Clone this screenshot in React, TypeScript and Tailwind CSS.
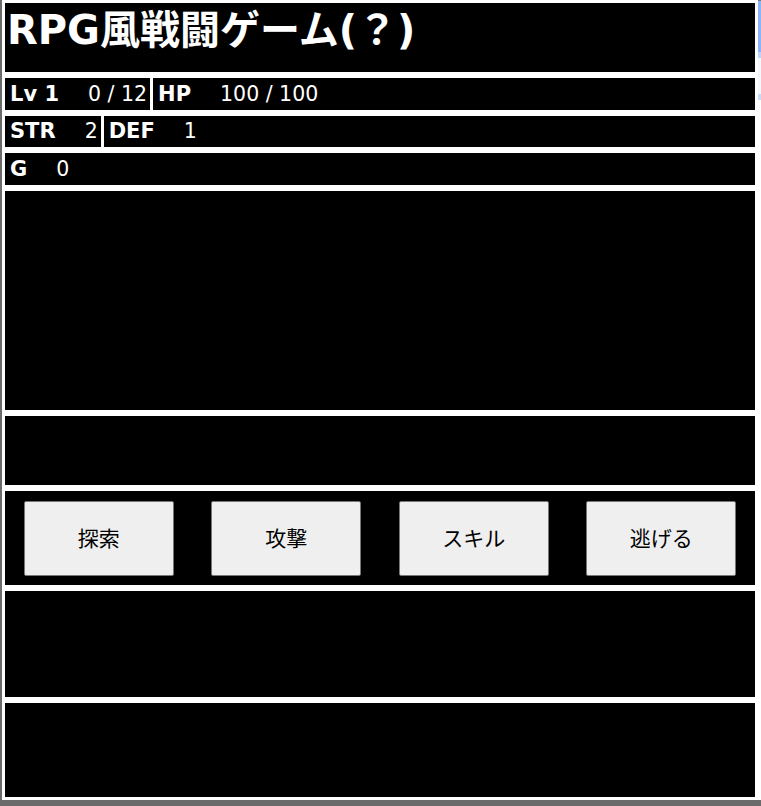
import React from 'react';

const font = { fontFamily: '"DejaVu Sans", "Noto Sans CJK JP", sans-serif' };

const Stat = ({ label, value, grow }: { label: string; value: string; grow?: boolean }) => (
  <div className={`flex items-center bg-black pl-[5px] pr-[3px] ${grow ? 'flex-1' : ''}`}>
    <span className="text-[21px] font-bold text-white mr-[29px] leading-none">{label}</span>
    <span className="text-[20.5px] text-white leading-none">{value}</span>
  </div>
);

const actions = ['探索', '攻撃', 'スキル', '逃げる'];

export default function App() {
  return (
    <div className="relative w-[761px] h-[806px] bg-[#6b6b6b] pl-[2px] pb-[6px] overflow-hidden" style={font}>
      <div className="h-full bg-white pl-[3px] pr-[6px] pt-[3px] flex flex-col gap-[6px]">
        <div className="h-[69px] bg-black px-[2px]">
          <h1 className="text-[40px] font-bold text-white leading-[54px]">RPG風戦闘ゲーム(？)</h1>
        </div>

        <div className="h-[32px] flex gap-[3px]">
          <Stat label="Lv 1" value="0 / 12" />
          <Stat label="HP" value="100 / 100" grow />
        </div>
        <div className="h-[31px] flex gap-[3px]">
          <Stat label="STR" value="2" />
          <Stat label="DEF" value="1" grow />
        </div>
        <div className="h-[32px] flex">
          <Stat label="G" value="0" grow />
        </div>

        <div className="h-[219px] bg-black" />
        <div className="h-[69px] bg-black" />

        <div className="h-[94px] bg-black flex items-center justify-around">
          {actions.map((a) => (
            <button
              key={a}
              className="w-[150px] h-[75px] bg-[#efefef] border border-[#767676] rounded-[2px] text-[21px] text-black"
              style={{ fontFamily: '"Noto Sans CJK JP", sans-serif' }}
            >
              {a}
            </button>
          ))}
        </div>

        <div className="h-[106px] bg-black" />
        <div className="h-[94px] bg-black" />
      </div>

      <div className="absolute right-0 top-0 w-[3px] flex flex-col">
        <div className="h-[1px] bg-[#777777]" />
        <div className="h-[51px] bg-[#8ab4f8]" />
        <div className="h-[6px] bg-[#bcd4f8]" />
        <div className="h-[36px] bg-[#f4f7fd]" />
        <div className="h-[6px] bg-[#c8dcf8]" />
      </div>
    </div>
  );
}
